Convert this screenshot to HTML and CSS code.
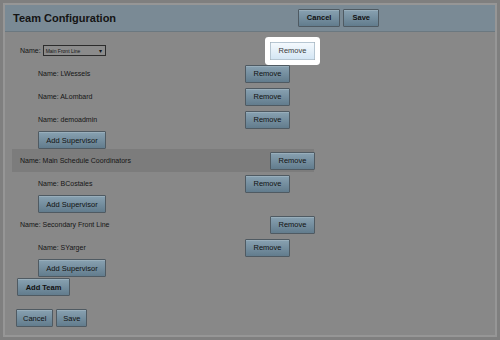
FILE: index.html
```html
<!DOCTYPE html>
<html lang="en">
<head>
    <meta charset="UTF-8">
    <title>Team Configuration</title>
    <link rel="stylesheet" href="styles.css">
</head>
<body>

<div class="panel">
    <header>
        <h1>Team Configuration</h1>
        <div class="actions">
            <button class="btn bold">Cancel</button>
            <button class="btn bold">Save</button>
        </div>
    </header>

    <div class="content">
        <!-- team 1 -->
        <div class="team-row">
            <div class="name">Name:
                <div class="select-box"><span>Main Front Line</span><span class="caret">&#9662;</span></div>
            </div>
            <button class="btn remove highlight">Remove</button>
        </div>
        <div class="sup-row">
            <span class="name">Name: LWessels</span>
            <button class="btn remove">Remove</button>
        </div>
        <div class="sup-row">
            <span class="name">Name: ALombard</span>
            <button class="btn remove">Remove</button>
        </div>
        <div class="sup-row">
            <span class="name">Name: demoadmin</span>
            <button class="btn remove">Remove</button>
        </div>
        <button class="btn add-sup">Add Supervisor</button>

        <!-- team 2 -->
        <div class="team-row active">
            <span class="name">Name: Main Schedule Coordinators</span>
            <button class="btn remove">Remove</button>
        </div>
        <div class="sup-row">
            <span class="name">Name: BCostales</span>
            <button class="btn remove">Remove</button>
        </div>
        <button class="btn add-sup">Add Supervisor</button>

        <!-- team 3 -->
        <div class="team-row">
            <span class="name">Name: Secondary Front Line</span>
            <button class="btn remove">Remove</button>
        </div>
        <div class="sup-row">
            <span class="name">Name: SYarger</span>
            <button class="btn remove">Remove</button>
        </div>
        <button class="btn add-sup">Add Supervisor</button>

        <button class="btn bold add-team">Add Team</button>

        <div class="footer">
            <button class="btn">Cancel</button>
            <button class="btn">Save</button>
        </div>
    </div>
</div>

</body>
</html>
```

FILE: styles.css
```css
* {
    margin: 0;
    padding: 0;
    box-sizing: border-box;
}

body {
    font-family: 'Liberation Sans', Arial, sans-serif;
    background-color: #7f7f7f;
    color: #151515;
    padding: 3px;
    width: 500px;
    height: 340px;
}

.panel {
    background-color: #888888;
    border: 2px solid #969696;
    height: 334px;
}

header {
    height: 27px;
    background-color: #7a8a95;
    border-bottom: 1px solid #6b7880;
    display: flex;
    align-items: center;
    justify-content: space-between;
    padding: 0 116px 0 8px;
}

header h1 {
    font-size: 11px;
    font-weight: bold;
    color: #141414;
}

.actions {
    display: flex;
    gap: 3px;
    margin-top: -1px;
}

.actions .btn {
    padding: 0 8px;
}

.btn {
    font-family: 'Liberation Sans', Arial, sans-serif;
    font-size: 7.5px;
    color: #111;
    height: 18px;
    padding: 0 6px;
    border: 1px solid #4f5a62;
    border-radius: 1px;
    background: linear-gradient(#88a1b1, #627c8d);
    box-shadow: inset 0 1px 0 rgba(255, 255, 255, 0.15);
}

.bold {
    font-weight: bold;
}

.content {
    padding-top: 7px;
}

.name {
    font-size: 7px;
    display: flex;
    align-items: center;
    gap: 2px;
}

.team-row {
    display: grid;
    grid-template-columns: 250px 45px;
    align-items: center;
    width: 302px;
    height: 23px;
    margin-left: 7px;
    padding-left: 8px;
}

.team-row.active {
    background-color: #7c7c7c;
}

.sup-row {
    display: grid;
    grid-template-columns: 207px 45px;
    align-items: center;
    height: 23px;
    padding-left: 33px;
}

.remove {
    width: 45px;
    padding: 0;
}

.highlight {
    background: linear-gradient(#f4f9fd, #d4e6f4);
    border-color: #b6c6d2;
    color: #3a3a3a;
    box-shadow: 0 0 0 5px #ffffff;
}

.select-box {
    display: flex;
    align-items: center;
    justify-content: space-between;
    width: 63px;
    height: 11px;
    padding: 0 3px 0 2px;
    border: 1px solid #2c2c2c;
    background-color: #8b8b8b;
    font-size: 5px;
}

.caret {
    font-size: 6px;
}

.add-sup {
    display: block;
    width: 68px;
    margin-left: 33px;
}

.add-team {
    display: block;
    width: 53px;
    margin: 1px 0 0 12px;
}

.footer {
    display: flex;
    gap: 3px;
    margin: 13px 0 0 11px;
}
```
